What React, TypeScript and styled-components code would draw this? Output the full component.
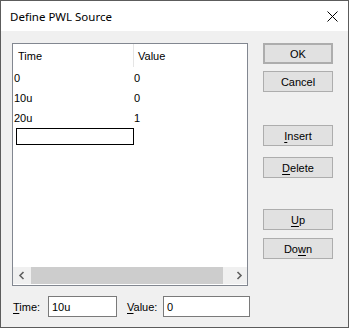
import * as React from "react";
import styled, { createGlobalStyle } from "styled-components";

let GlobalStyle = createGlobalStyle`
  html, body {
    margin: 0;
    padding: 0;
    background: #f0f0f0;
  }
  * {
    box-sizing: border-box;
  }
`;

let rows = [
  { time: "0", value: "0" },
  { time: "10u", value: "0" },
  { time: "20u", value: "1" },
];

let App = () => {
  return (
    <React.Fragment>
      <GlobalStyle />
      <Window>
        <TitleBar>
          <Title>Define PWL Source</Title>
          <CloseIcon width="11" height="11" viewBox="0 0 11 11">
            <path d="M0.5 0.5 L10.5 10.5 M10.5 0.5 L0.5 10.5" stroke="#000" strokeWidth="1" />
          </CloseIcon>
        </TitleBar>
        <Body>
          <TopRow>
            <ListBox>
              <HeaderRow>
                <HeaderCell>Time</HeaderCell>
                <HeaderCell divider>Value</HeaderCell>
              </HeaderRow>
              <Rows>
                {rows.map(({ time, value }) => (
                  <DataRow key={time}>
                    <DataCell>{time}</DataCell>
                    <DataCell second>{value}</DataCell>
                  </DataRow>
                ))}
                <EditBox />
              </Rows>
              <ScrollBar>
                <ScrollArrow>
                  <svg width="8" height="9" viewBox="0 0 8 9">
                    <path d="M5.5 1 L2 4.5 L5.5 8" stroke="#606060" strokeWidth="1.6" fill="none" />
                  </svg>
                </ScrollArrow>
                <ScrollTrack>
                  <ScrollThumb />
                </ScrollTrack>
                <ScrollArrow>
                  <svg width="8" height="9" viewBox="0 0 8 9">
                    <path d="M2.5 1 L6 4.5 L2.5 8" stroke="#606060" strokeWidth="1.6" fill="none" />
                  </svg>
                </ScrollArrow>
              </ScrollBar>
            </ListBox>
            <ButtonColumn>
              <ButtonGroup spacing={7}>
                <Button isDefault>OK</Button>
                <Button>Cancel</Button>
              </ButtonGroup>
              <ButtonGroup spacing={11} offset={33}>
                <Button>
                  <u>I</u>nsert
                </Button>
                <Button>
                  <u>D</u>elete
                </Button>
              </ButtonGroup>
              <ButtonGroup spacing={8} offset={31}>
                <Button>
                  <u>U</u>p
                </Button>
                <Button>
                  Do<u>w</u>n
                </Button>
              </ButtonGroup>
            </ButtonColumn>
          </TopRow>
          <FieldRow>
            <FieldLabel>
              <u>T</u>ime:
            </FieldLabel>
            <TextField width={69} defaultValue="10u" />
            <FieldLabel spaced>
              <u>V</u>alue:
            </FieldLabel>
            <TextField width={87} defaultValue="0" />
          </FieldRow>
        </Body>
      </Window>
    </React.Fragment>
  );
};

interface CellProps {
  readonly divider?: boolean;
  readonly second?: boolean;
}

interface ButtonProps {
  readonly isDefault?: boolean;
}

interface GroupProps {
  readonly spacing: number;
  readonly offset?: number;
}

interface LabelProps {
  readonly spaced?: boolean;
}

let Window = styled.div`
  width: 349px;
  height: 328px;
  border: 1px solid #5c5c5c;
  background: #f0f0f0;
  display: flex;
  flex-direction: column;
  font-family: "Liberation Sans", Arial, sans-serif;
  font-size: 11px;
  color: #000;
`;

let TitleBar = styled.div`
  height: 30px;
  background: #fff;
  display: flex;
  align-items: center;
  justify-content: space-between;
  padding: 0 10px 0 9px;
`;

let Title = styled.span`
  font-family: "Noto Sans", "Open Sans", sans-serif;
  font-size: 11.5px;
  color: #000;
  margin-top: 0;
`;

let CloseIcon = styled.svg`
  display: block;
  margin-top: 0;
`;

let Body = styled.div`
  flex: 1;
  display: flex;
  flex-direction: column;
  padding: 12px 0 0 11px;
`;

let TopRow = styled.div`
  display: flex;
  gap: 15px;
`;

let ListBox = styled.div`
  width: 236px;
  height: 243px;
  border: 1px solid #828790;
  background: #fff;
  display: flex;
  flex-direction: column;
`;

let HeaderRow = styled.div`
  height: 23px;
  display: flex;
  align-items: stretch;
`;

let HeaderCell = styled.div<CellProps>`
  display: flex;
  align-items: center;
  padding-left: ${props => (props.divider ? "4px" : "5px")};
  width: ${props => (props.divider ? "auto" : "120px")};
  flex: ${props => (props.divider ? "1" : "none")};
  border-left: ${props => (props.divider ? "1px solid #e5e5e5" : "none")};
  margin: 0;
`;

let Rows = styled.div`
  flex: 1;
  display: flex;
  flex-direction: column;
  padding-top: 1px;
`;

let DataRow = styled.div`
  height: 20px;
  display: flex;
  align-items: center;
`;

let DataCell = styled.div<CellProps>`
  width: ${props => (props.second ? "auto" : "120px")};
  padding-left: 1px;
`;

let EditBox = styled.div`
  width: 118px;
  height: 17px;
  margin: 0 0 0 3px;
  border: 1px solid #000;
`;

let ScrollBar = styled.div`
  height: 17px;
  background: #f0f0f0;
  display: flex;
  margin-bottom: 1px;
`;

let ScrollArrow = styled.div`
  width: 17px;
  display: flex;
  align-items: center;
  justify-content: center;
`;

let ScrollTrack = styled.div`
  flex: 1;
  display: flex;
  padding: 0 7px 0 1px;
`;

let ScrollThumb = styled.div`
  flex: 1;
  background: #cdcdcd;
`;

let ButtonColumn = styled.div`
  display: flex;
  flex-direction: column;
`;

let ButtonGroup = styled.div<GroupProps>`
  display: flex;
  flex-direction: column;
  gap: ${props => props.spacing}px;
  margin-top: ${props => props.offset ?? 0}px;
`;

let Button = styled.button<ButtonProps>`
  width: 70px;
  height: 21px;
  padding: 0;
  background: #e1e1e1;
  border: ${props => (props.isDefault ? "2px solid #adadad" : "1px solid #adadad")};
  font-family: "Liberation Sans", Arial, sans-serif;
  font-size: 11px;
  color: #000;
  display: flex;
  align-items: center;
  justify-content: center;

  u {
    text-decoration-thickness: 1px;
    text-underline-offset: 2px;
  }
`;

let FieldRow = styled.div`
  display: flex;
  align-items: center;
  margin-top: 10px;
`;

let FieldLabel = styled.span<LabelProps>`
  width: ${props => (props.spaced ? "46px" : "36px")};
  padding-left: ${props => (props.spaced ? "10px" : "1px")};

  u {
    text-underline-offset: 2px;
  }
`;

let TextField = styled.input<{ width: number }>`
  width: ${props => props.width}px;
  height: 21px;
  border: 1px solid #7a7a7a;
  background: #fff;
  padding: 0 0 0 3px;
  font-family: "Liberation Sans", Arial, sans-serif;
  font-size: 11px;
  color: #000;
  outline: none;
`;

export default App;
